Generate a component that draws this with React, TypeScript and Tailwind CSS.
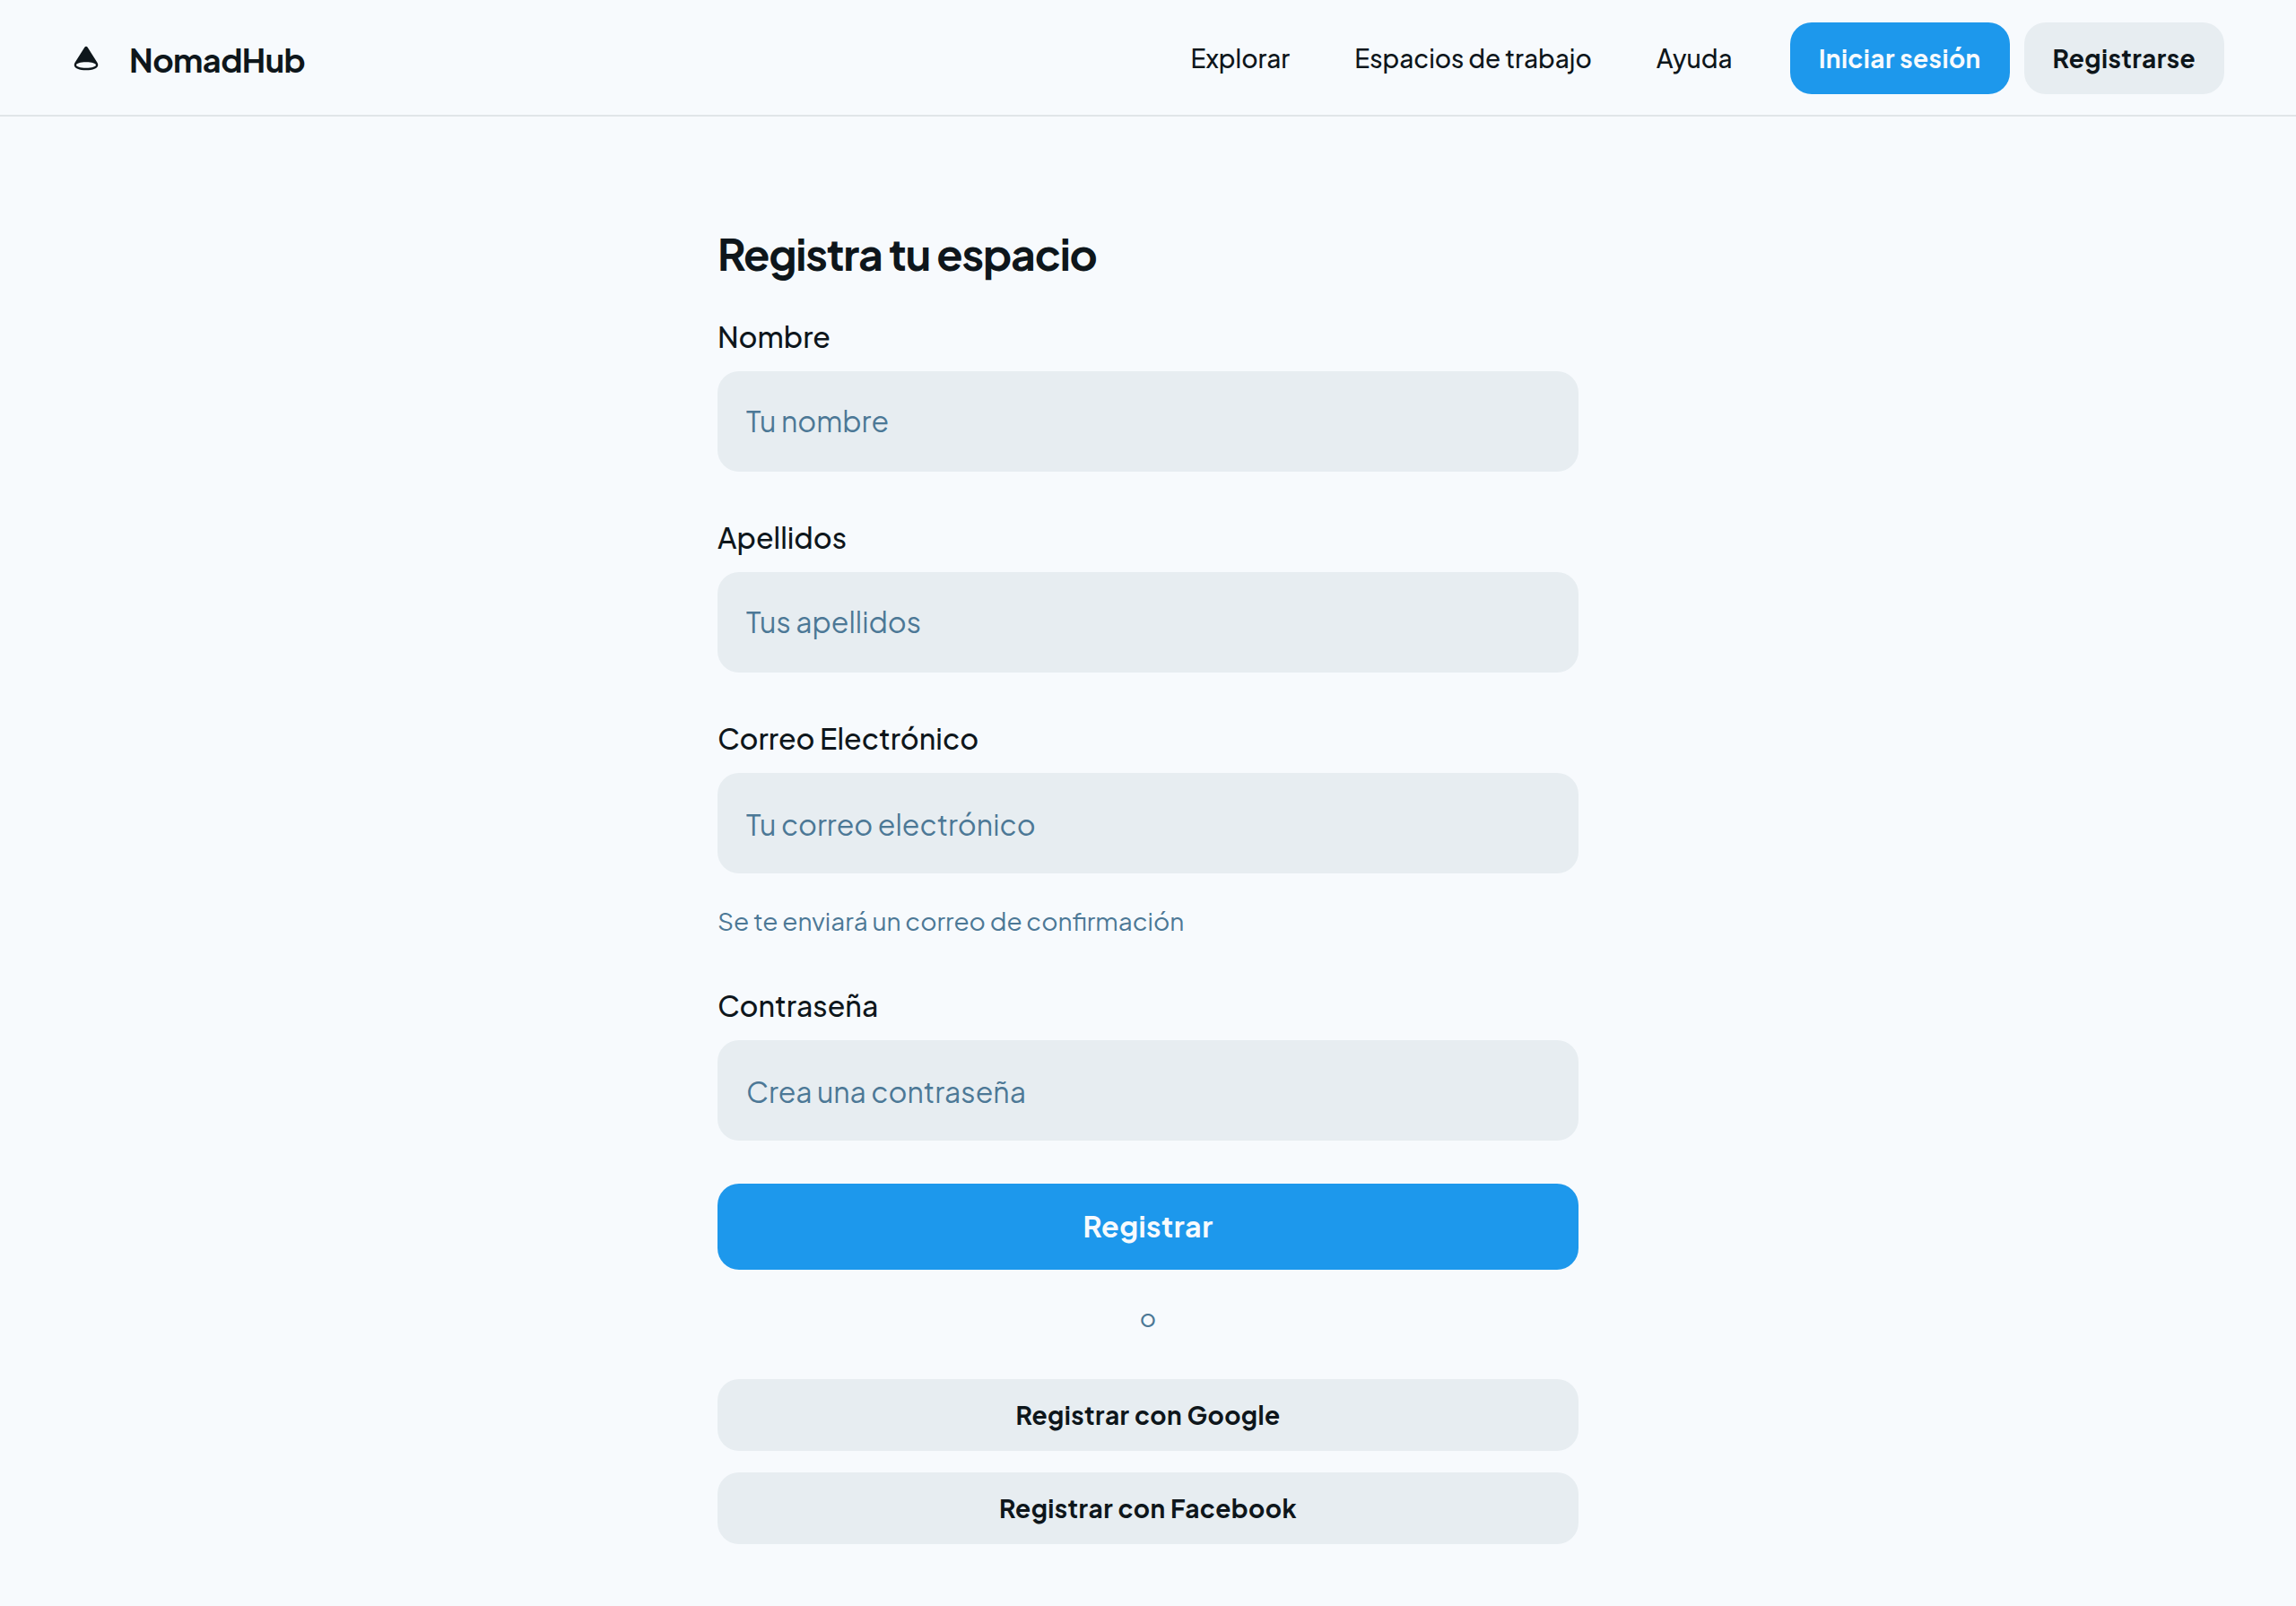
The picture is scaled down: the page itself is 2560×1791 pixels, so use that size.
import React from "react";

function LogoMark() {
  return (
    <svg viewBox="0 0 48 48" fill="none" className="mb-0.5 size-8 shrink-0" aria-hidden="true">
      <path
        fill="currentColor"
        fillRule="evenodd"
        clipRule="evenodd"
        d="M24 5.500c-1 0-1.800.6-2.500 1.600L5.600 32.200C4.600 33.700 4.100 35.200 4.100 36.600C4.100 42 12.800 45.300 24 45.300S43.900 42 43.900 36.600C43.900 35.200 43.400 33.700 42.400 32.200L26.500 7.100C25.800 6.100 25 5.500 24 5.500ZM24 32C14.400 32 7.600 34.200 7.600 36.900S14.400 41.800 24 41.800S40.400 39.600 40.400 36.900S33.600 32 24 32Z"
      />
    </svg>
  );
}

type FieldProps = { label: string; placeholder: string; type?: string; inset?: string };

function Field({ label, placeholder, type = "text", inset = "pt-[31px] pb-[33px]" }: FieldProps) {
  return (
    <label className="flex flex-col py-6">
      <span className="pt-px pb-[15px] text-[32px] leading-[48px] font-medium">{label}</span>
      <input
        type={type}
        placeholder={placeholder}
        className={`h-28 w-full rounded-3xl bg-[#e7edf1] px-8 text-[32px] leading-[48px] font-normal outline-none placeholder:text-[#4c7896] placeholder:opacity-100 ${inset}`}
      />
    </label>
  );
}

const links = ["Explorar", "Espacios de trabajo", "Ayuda"];

export default function App() {
  return (
    <div className="flex min-h-screen flex-col bg-[#f7fafd] font-['Plus_Jakarta_Sans','Inter','Noto_Sans',sans-serif] text-[#0e161b]">
      <header className="flex items-center justify-between border-b-2 border-[#e0e5e8] px-20 pt-[25px] pb-[23px]">
        <div className="flex items-center gap-8">
          <LogoMark />
          <h2 className="pt-0.5 text-[36px] leading-[45px] font-bold tracking-[-0.015em]">NomadHub</h2>
        </div>
        <div className="flex items-center gap-16">
          <nav className="flex items-center gap-[72px]">
            {links.map((l) => (
              <a key={l} href="#" className="text-[28px] leading-[42px] font-medium">
                {l}
              </a>
            ))}
          </nav>
          <div className="flex gap-4">
            <button className="h-20 rounded-3xl bg-[#1d98ec] px-8 text-[28px] leading-[42px] font-bold tracking-[0.015em] text-[#f7fafd]">
              Iniciar sesión
            </button>
            <button className="h-20 rounded-3xl bg-[#e7edf1] px-8 text-[28px] leading-[42px] font-bold tracking-[0.015em]">
              Registrarse
            </button>
          </div>
        </div>
      </header>

      <main className="mx-auto flex w-[960px] flex-col pt-[123px]">
        <h1 className="pb-[13px] text-[48px] leading-[60px] font-bold tracking-[-0.025em]">Registra tu espacio</h1>
        <form className="flex flex-col">
          <Field label="Nombre" placeholder="Tu nombre" />
          <Field label="Apellidos" placeholder="Tus apellidos" />
          <Field
            label="Correo Electrónico"
            placeholder="Tu correo electrónico"
            type="email"
            inset="pt-[33px] pb-[31px]"
          />
          <p className="pt-2 pb-6 text-[28px] leading-[42px] font-normal text-[#4c7896]">
            Se te enviará un correo de confirmación
          </p>
          <Field label="Contraseña" placeholder="Crea una contraseña" type="password" inset="pt-[33px] pb-[31px]" />
          <div className="flex py-6">
            <button
              type="button"
              className="h-24 flex-1 rounded-3xl bg-[#1d98ec] pb-0.5 text-[32px] leading-[48px] font-bold tracking-[0.015em] text-[#f7fafd]"
            >
              Registrar
            </button>
          </div>
          <p className="pt-2 pb-6 text-center text-[28px] leading-[42px] font-normal text-[#4c7896]">o</p>
          <div className="flex flex-col gap-6 py-6">
            <button
              type="button"
              className="h-20 rounded-3xl bg-[#e7edf1] text-[28px] leading-[42px] font-bold tracking-[0.015em]"
            >
              Registrar con Google
            </button>
            <button
              type="button"
              className="h-20 rounded-3xl bg-[#e7edf1] text-[28px] leading-[42px] font-bold tracking-[0.015em]"
            >
              Registrar con Facebook
            </button>
          </div>
        </form>
      </main>
    </div>
  );
}
